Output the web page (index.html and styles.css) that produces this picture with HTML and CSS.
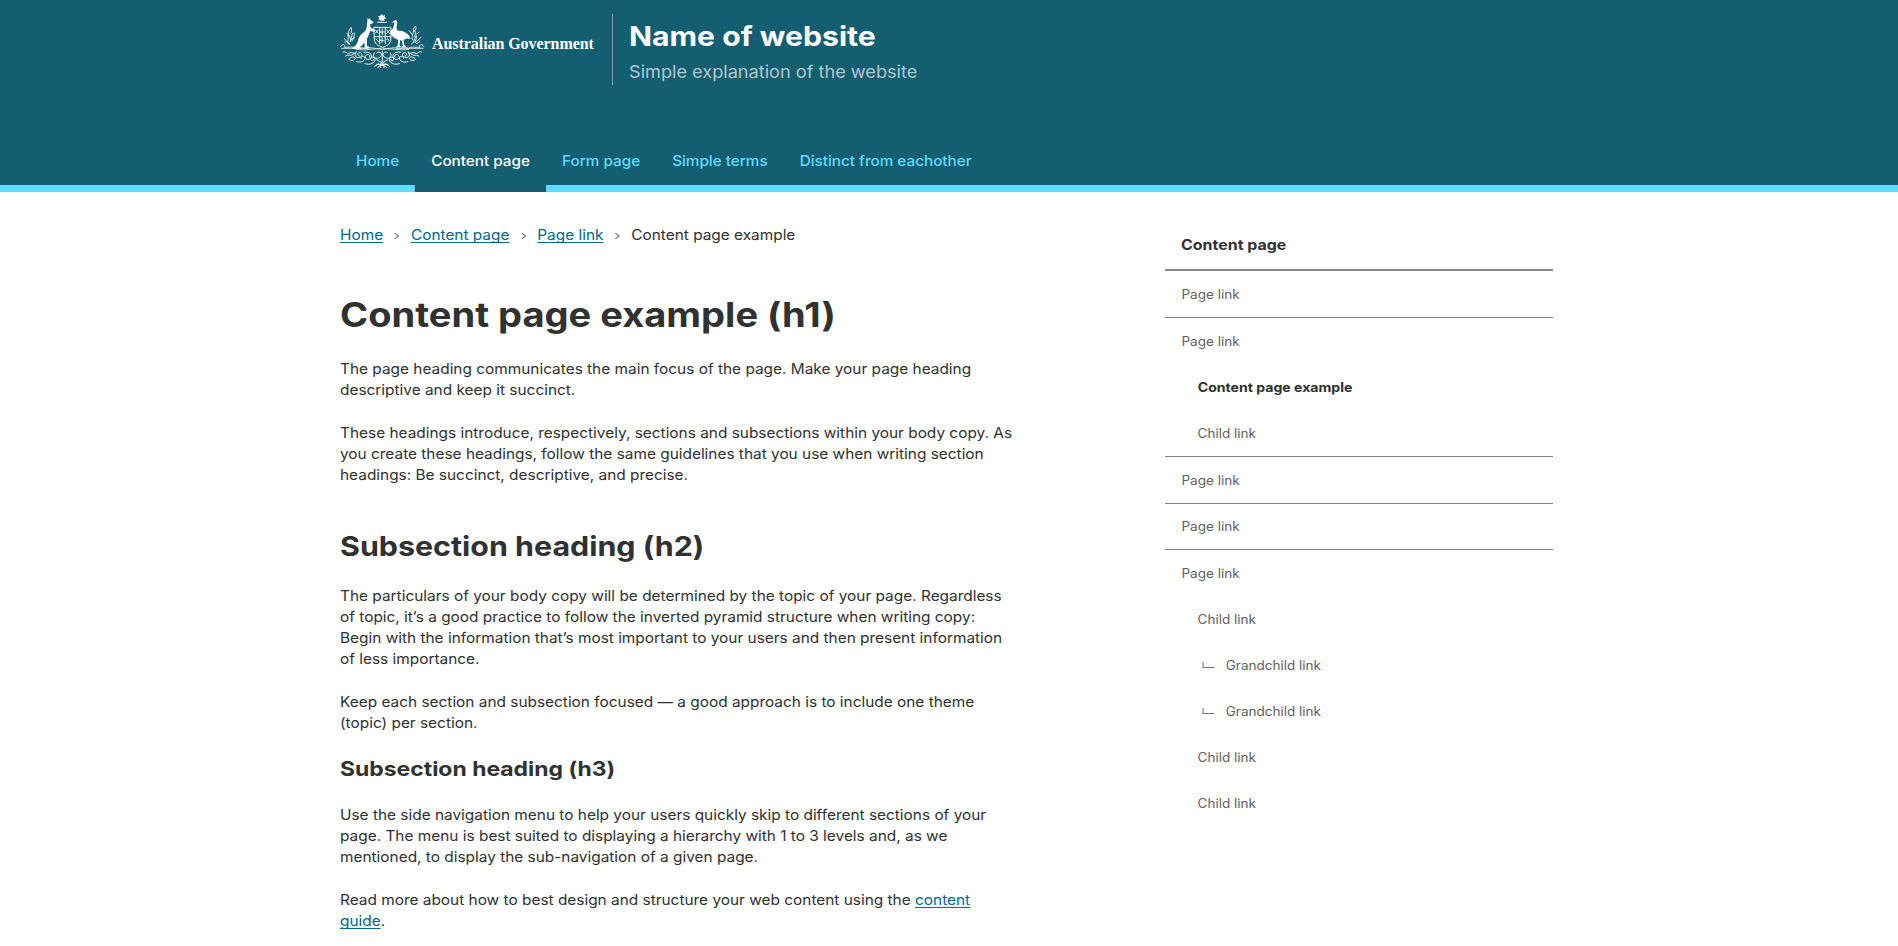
FILE: index.html
```html
<!DOCTYPE html>
<html lang="en">
<head>
<meta charset="utf-8">
<title>Content page example</title>
<link rel="stylesheet" href="styles.css">
</head>
<body>
<header class="header">
  <div class="brand">
    <svg class="crest" viewBox="0 0 254 162" fill="none" stroke="#fff" stroke-linecap="round">
      <path fill="#fff" stroke="none" d="M126 0l3 5 6-2-1 6 5 4-6 2 0 6-5-2-5 3-2-5-6 0 3-5-4-5 6-1zM112 23h29v3h-29z"/>
      <g fill="#fff" stroke="none">
        <path d="M83 11l4 5 3-4 2 7 9 5-2 4-8 2c-1 5 0 8 3 12l9 5 3 5-4 1-12-2-2 8-7 15 0 22 8 3v4H75l-2-17-8 9-8 6 6 1v3H36c6-8 14-10 18-25 3-13 8-18 18-25 7-6 8-14 9-23z"/>
        <path d="M162 21c2-4 7-4 9 0 3 6-1 13-1 20 0 6 2 9 7 9 12 0 24 5 30 14l5 12-10-3c-3 2-7 4-11 4l2 15 6 7h-16l6-3-3-16-5-2-2 16 5 4-4 2h-15l8-4 2-19c-10-3-19-9-23-18-3-7 3-9 6-14 4-7 6-15 4-20l-9 2z"/>
      </g>
      <path stroke-width="2.8" d="M103 40h50v33c0 16-9 21-25 27-16-6-25-11-25-27zM103 68h50M119 40v49M136 40v49M107 48l7 9M114 48l-7 9M127 45v18M121 54h12M141 48l8 10M149 48l-8 10M108 75l8 8M126 72v14M121 79h12M140 76c7-2 9 2 5 6"/>
      <path stroke-width="2.4" d="M2 98c4-11 17-6 11 2 17 1 25-4 36 3 10-6 22 2 34-1 15-3 26 5 44 0 18 5 30-3 44 0 12 3 24-5 35 1 10-7 20-2 35-3-6-8 7-13 11-2M4 103h80M170 103h80M48 106c30 6 56-6 79 1 23-7 49 5 79-1"/>
      <path stroke-width="2.6" d="M24 91c-3-11 4-17-1-27 8 3 11 12 8 19 4-9 2-19 8-26M29 91c-2-10-15-8-16-18M28 67c-7-10-1-20 5-27 3 7 2 13-1 18M35 76c8-4 8-11 8-19M15 84c6-2 10 1 13 5M21 58l7 7M43 70l-7 11M215 90c11-7 7-16 14-25 2 9-1 16-7 21M219 78c-7-10 2-17 3-31 6 8 7 15 1 21M226 86c4-9 15-7 16-16M222 51c-2-6 1-11 5-15 3 6 2 11-3 16M229 61l9-7M208 50l8 10M240 83l-10 6"/>
      <path stroke-width="2.8" d="M9 114c12-4 10 9 19 3 9-4 12 4 20 0M17 126c8-6 15 2 23-5M27 136c6 6 15 5 19-3-4-7-14-4-19 3M49 113c-8 10-2 21 10 17 10-2 9-14 0-14-8 1-7 10-1 10M50 143c12 5 27-2 25-12-4-8-14-3-12 3M72 115c18-4 27 8 21 17-9 10-22 1-15-8 7-6 15 0 11 6M75 149c16 6 33-3 30-15-5-8-15-4-12 4 2 5 9 3 8-2M103 117c-8 13 5 21 18 12 9-9-1-19-10-13M245 114c-12-4-10 9-19 3-9-4-12 4-20 0M237 126c-8-6-15 2-23-5M227 136c-6 6-15 5-19-3 4-7 14-4 19 3M205 113c8 10 2 21-10 17-10-2-9-14 0-14 8 1 7 10 1 10M204 143c-12 5-27-2-25-12 4-8 14-3 12 3M182 115c-18-4-27 8-21 17 9 10 22 1 15-8-7-6-15 0-11 6M179 149c-16 6-33-3-30-15 5-8 15-4 12 4-2 5-9 3-8-2M151 117c8 13-5 21-18 12-9-9 1-19 10-13M110 137l17 10 17-10M127 112v40M114 161c1-10 25-8 27 0M109 151h35M121 149v12M132 149v12M104 157l12-7M149 157l-12-7"/>
    </svg>
    <span class="government">Australian Government</span>
    <div class="site">
      <div class="site-title">Name of website</div>
      <div class="site-subline">Simple explanation of the website</div>
    </div>
  </div>
  <nav class="main-nav">
    <a class="nav-link">Home</a>
    <a class="nav-link active">Content page</a>
    <a class="nav-link">Form page</a>
    <a class="nav-link">Simple terms</a>
    <a class="nav-link">Distinct from eachother</a>
  </nav>
</header>
<div class="page">
  <main class="content">
    <nav class="breadcrumbs">
      <a class="link">Home</a>
      <svg class="chevron" viewBox="0 0 6 8"><path d="M1 .8L4.8 4 1 7.2"/></svg>
      <a class="link">Content page</a>
      <svg class="chevron" viewBox="0 0 6 8"><path d="M1 .8L4.8 4 1 7.2"/></svg>
      <a class="link">Page link</a>
      <svg class="chevron" viewBox="0 0 6 8"><path d="M1 .8L4.8 4 1 7.2"/></svg>
      <span>Content page example</span>
    </nav>
    <h1 class="h1">Content page example (h1)</h1>
    <p class="text">The page heading communicates the main focus of the page. Make your page heading<br>descriptive and keep it succinct.</p>
    <p class="text">These headings introduce, respectively, sections and subsections within your body copy. As<br>you create these headings, follow the same guidelines that you use when writing section<br>headings: Be succinct, descriptive, and precise.</p>
    <h2 class="h2">Subsection heading (h2)</h2>
    <p class="text">The particulars of your body copy will be determined by the topic of your page. Regardless<br>of topic, it’s a good practice to follow the inverted pyramid structure when writing copy:<br>Begin with the information that’s most important to your users and then present information<br>of less importance.</p>
    <p class="text">Keep each section and subsection focused — a good approach is to include one theme<br>(topic) per section.</p>
    <h3 class="h3">Subsection heading (h3)</h3>
    <p class="text">Use the side navigation menu to help your users quickly skip to different sections of your<br>page. The menu is best suited to displaying a hierarchy with 1 to 3 levels and, as we<br>mentioned, to display the sub-navigation of a given page.</p>
    <p class="text">Read more about how to best design and structure your web content using the <a class="link">content<br>guide</a>.</p>
  </main>
  <aside class="side-nav">
    <div class="side-title"><div class="side-title-text">Content page</div></div>
    <div class="group"><a class="item">Page link</a></div>
    <div class="group">
      <a class="item">Page link</a>
      <a class="item child current">Content page example</a>
      <a class="item child">Child link</a>
    </div>
    <div class="group"><a class="item">Page link</a></div>
    <div class="group"><a class="item">Page link</a></div>
    <div class="group">
      <a class="item">Page link</a>
      <a class="item child">Child link</a>
      <a class="item grandchild"><i class="elbow"></i>Grandchild link</a>
      <a class="item grandchild"><i class="elbow"></i>Grandchild link</a>
      <a class="item child">Child link</a>
      <a class="item child">Child link</a>
    </div>
  </aside>
</div>
</body>
</html>
```
FILE: styles.css
```css
* { box-sizing: border-box; }
html { overflow: hidden; }
body {
  margin: 0;
  height: 946px;
  overflow: hidden;
  background: #fff;
  color: #313131;
  font-family: Inter, "Liberation Sans", sans-serif;
  font-size: 14.3px;
  font-weight: 400;
  white-space: nowrap;
}

/* Wide letterforms: text blocks are stretched from their left edge. */
.site-title, .site-subline, .main-nav, .breadcrumbs,
.h1, .h2, .h3, .text, .side-title-text, .item {
  transform-origin: 0 50%;
}

.header {
  height: 191.6px;
  padding: 14px 0 0 340px;
  background: linear-gradient(#135e70 184.6px, #61daff 184.6px);
}
.brand { display: flex; height: 71px; }
.crest { width: 84.5px; height: 54px; flex: none; }
.government {
  width: 187.5px;
  padding: 18px 0 0 7.5px;
  color: #fff;
  font: bold 16px/24px "Liberation Serif", serif;
  letter-spacing: -0.06px;
}
.site {
  padding: 6px 0 0 15.5px;
  border-left: 1px solid #7ba5af;
}
.site-title {
  color: #fff;
  font-size: 27.3px;
  font-weight: 700;
  line-height: 33px;
  transform: scaleX(1.105);
}
.site-subline {
  margin-top: 7.8px;
  color: #b0c9cf;
  font-size: 17px;
  line-height: 22px;
  transform: scaleX(1.067);
}
.main-nav { display: flex; width: 600px; margin-top: 51px; transform: scaleX(1.068); }
.nav-link {
  height: 55.6px;
  padding: 12.6px 15px 0;
  color: #61daff;
  line-height: 24px;
  font-weight: 500;
}
.active { background: #135e70; color: #fff; }
.page {
  display: flex;
  justify-content: space-between;
  width: 1553.4px;
  padding: 30.8px 0 0 340px;
}
.content { width: 640px; }
.breadcrumbs {
  display: flex;
  align-items: center;
  height: 24px;
  padding-top: 1px;
  line-height: 24px;
  transform: scaleX(1.076);
}
.chevron {
  width: 5.5px;
  height: 8px;
  margin: 3px 10.2px 0;
  fill: none;
  stroke: #777;
  stroke-width: 1.2;
}
.link {
  color: #00698f;
  text-decoration: underline;
  text-decoration-thickness: 1px;
  text-underline-offset: 2px;
  text-decoration-skip-ink: none;
}
.h1 { margin: 47.2px 0 22.5px; font-size: 33.7px; line-height: 42px; transform: scaleX(1.13); }
.h2 { margin: 43.6px 0 21.7px; font-size: 27.5px; line-height: 34px; transform: scaleX(1.105); }
.h3 { margin: 23.1px 0 21.7px; font-size: 20.2px; line-height: 26px; transform: scaleX(1.136); }
.text { margin: 0 0 21.2px; line-height: 21.2px; transform: scaleX(1.077); }
.side-nav { width: 388.4px; padding-top: 10.8px; font-size: 12.6px; }
.side-title {
  height: 37.9px;
  padding-left: 16px;
  border-bottom: 2px solid #888;
}
.side-title-text {
  font-size: 14.5px;
  font-weight: 700;
  line-height: 24px;
  transform: scaleX(1.1);
}
.group + .group { border-top: 1px solid #888; }
.item {
  display: flex;
  align-items: center;
  height: 45.9px;
  padding: 1px 0 0 15.4px;
  color: #626262;
  transform: scaleX(1.072);
}
.child { padding-left: 30.4px; }
.grandchild { padding-left: 35.2px; }
.current {
  padding-left: 29.3px;
  color: #313131;
  font-weight: 700;
  transform: scaleX(1.118);
}
.elbow {
  width: 11.3px;
  height: 6px;
  margin: 0 10.2px 2px 0;
  border: solid #777;
  border-width: 0 0 1px 1px;
}
```
